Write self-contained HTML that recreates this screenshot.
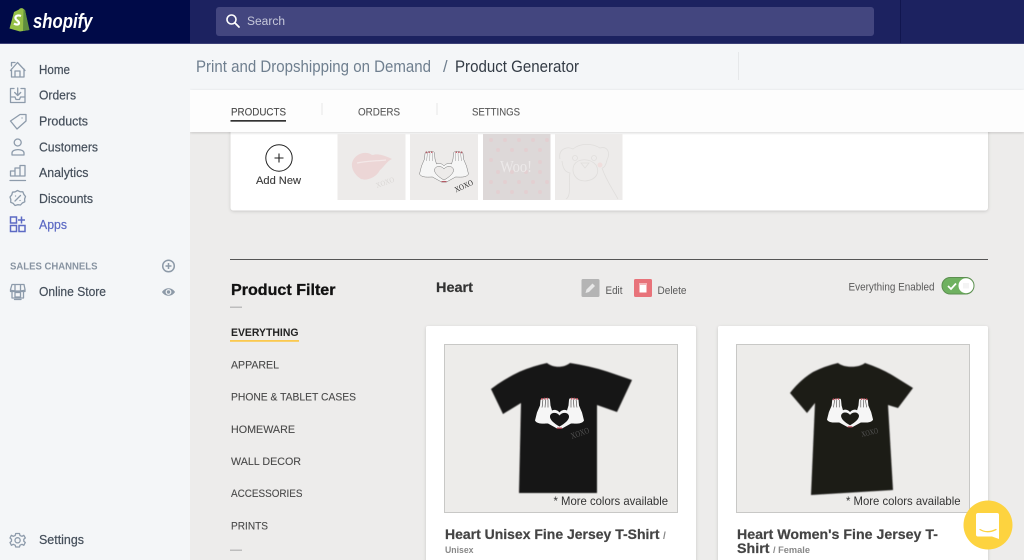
<!DOCTYPE html>
<html><head><meta charset="utf-8"><style>
html,body{margin:0;padding:0;width:1024px;height:560px;overflow:hidden;background:#edeceb}
svg{display:block}
.s{font-family:"Liberation Sans",sans-serif;font-size:12.500px;fill:#454f5b;stroke:#454f5b;stroke-width:.2}
.m{font-family:"Liberation Sans",sans-serif;font-size:11px;fill:#4a4a4a;stroke:#4a4a4a;stroke-width:.12}
.o{font-family:"Liberation Sans",sans-serif;font-size:11px;fill:#5a5a5a}
.b{font-family:"Liberation Sans",sans-serif;font-weight:700}
.i{fill:none;stroke:#8d9bab;stroke-width:1.300;stroke-linejoin:round;stroke-linecap:round}
</style></head><body>
<svg width="1024" height="560" viewBox="0 0 1024 560" xmlns="http://www.w3.org/2000/svg">
<defs>
<filter id="sh" x="-5%" y="-5%" width="110%" height="110%"><feDropShadow dx="0" dy="1" stdDeviation="1.500" flood-color="#000" flood-opacity=".16"/></filter>
<filter id="bl"><feGaussianBlur stdDeviation=".4"/></filter>
<path id="hp" fill-rule="evenodd" d="M5.500 2.500Q6.500 0 8 1.500Q9 0 10.500 1Q12 0 13 1Q14.500 0 15 2.500L15.500 8L17 13C20 11.500 23 13 24.500 15C26 13 29 11.500 32 13L33.500 8L34 2.500Q34.500 0 36 1Q37 0 38.500 1Q40 0 41 1.500Q42.500 0 43.500 2.500L44 8L47 15L49 23C47 27 40 26 36 26L27 31L22 31L13 26C9 26 2 27 0 23L2 15L5 8ZM24.500 29C19 26 14.500 22 15 18.500C16 14.500 22 14.500 24.500 18C27 14.500 33 14.500 34 18.500C34.500 22 30 26 24.500 29Z"/>
<g id="hands">
<use href="#hp" fill="#f6f6f6"/>
<path fill="none" stroke="currentColor" stroke-width=".5" d="M8 2L7 10M10.500 2L10 10M13 2L13 10M41 2L42 10M38.500 2L39 10M36 2L36 10"/>
<path fill="#c8505e" d="M6.200 .5h1.500v1.700H6.200zM9 .3h1.300v1.700H9zM11.600 .3h1.300v1.700h-1.300zM36.100 .3h1.300v1.700h-1.300zM38.700 .3h1.300v1.700h-1.300zM41.300 .5h1.500v1.700h-1.500zM22 30h5v1.200h-5z"/>
</g>
</defs>

<!-- page -->
<rect width="1024" height="560" fill="#edeceb"/>

<!-- title bar -->
<rect x="190" y="44" width="834" height="46" fill="#f4f6f8"/>
<rect x="738" y="52" width="1" height="28" fill="#e6e8ea"/>
<text x="196" y="72" font-family="Liberation Sans,sans-serif" font-size="16.500" fill="#6f7f8f" textLength="235" lengthAdjust="spacingAndGlyphs">Print and Dropshipping on Demand</text>
<text x="443" y="72" font-family="Liberation Sans,sans-serif" font-size="16.500" fill="#6f7f8f">/</text>
<text x="455" y="72" font-family="Liberation Sans,sans-serif" font-size="16.500" fill="#333b45" textLength="124" lengthAdjust="spacingAndGlyphs">Product Generator</text>

<!-- card top -->
<rect x="230.500" y="120" width="757.500" height="90.500" rx="3" fill="#fff" filter="url(#sh)"/>

<!-- tabs -->
<rect x="190" y="90" width="834" height="42" fill="#fdfdfd" filter="url(#sh)"/>
<text class="m" x="231" y="115.500" textLength="55" lengthAdjust="spacingAndGlyphs">PRODUCTS</text>
<rect x="230.500" y="120" width="55.500" height="1.700" fill="#333"/>
<rect x="321.500" y="103" width="1" height="12" fill="#e8e8e8"/>
<text class="m" x="358" y="115.500" textLength="42" lengthAdjust="spacingAndGlyphs" style="fill:#5a5a5a;stroke:#5a5a5a">ORDERS</text>
<rect x="436.500" y="103" width="1" height="12" fill="#e8e8e8"/>
<text class="m" x="472" y="115.500" textLength="48" lengthAdjust="spacingAndGlyphs" style="fill:#5a5a5a;stroke:#5a5a5a">SETTINGS</text>

<!-- top bar -->
<rect width="1024" height="43" fill="#1c2260"/>
<rect x="0" width="190" height="43" fill="#000a48"/>
<rect x="900" width="1" height="43" fill="#11164f"/>
<rect y="43" width="1024" height="1" fill="#3d4178"/>
<rect x="216" y="7" width="658" height="29" rx="3" fill="#43467f"/>
<circle cx="231.500" cy="19.500" r="4.500" fill="none" stroke="#fff" stroke-width="1.600"/>
<path d="M235 23l4 4" stroke="#fff" stroke-width="1.800" stroke-linecap="round"/>
<text x="247" y="25" font-family="Liberation Sans,sans-serif" font-size="11.500" fill="#c6c8da" textLength="38" lengthAdjust="spacingAndGlyphs">Search</text>

<!-- logo -->
<path d="M9.500 28.500L14 12L19 9.500C20 8 22.500 7.500 24 9.500L25 10L29 30L20 31.500Z" fill="#95bf47"/>
<path d="M23.500 10L25 10L29.500 30L23 31Z" fill="#5e8e3e"/>
<path d="M21 16c-4-1.500-6 .5-5.500 2.500.5 2 3.500 2.500 3.500 4.500 0 2-3 2-5 .5" fill="none" stroke="#fff" stroke-width="2.200"/>
<text x="33" y="28" font-family="Liberation Sans,sans-serif" font-weight="700" font-style="italic" font-size="20" fill="#fff" textLength="59.500" lengthAdjust="spacingAndGlyphs">shopify</text>

<!-- sidebar -->
<rect x="0" y="44" width="190" height="516" fill="#f4f6f8"/>
<path class="i" d="M10.500 70.500L17.500 62.500L25 70.500M11.500 69V77H24V69M15 77V71H20V77M11.500 66V62.500H15"/>
<path class="i" d="M14 88.500H10.500V102.500H25V88.500H21M10.500 97H15L16 99.500H19.500L20.500 97H25M17.700 88V95M14.700 92.500L17.700 95.500L20.700 92.500"/>
<path class="i" d="M10.500 121L20 114.500H26V121L17 129ZM22 118h.1"/>
<circle class="i" cx="17.700" cy="142.500" r="3.500"/>
<path class="i" d="M12 155V153C12 148.500 24 148.500 24 153V155Z"/>
<path class="i" d="M10.500 176V171H15V176M15 176V168H20V176M20 176V165.500H25V176H10.500M10 180.500H25.500"/>
<path class="i" d="M17.500 190.500L20 191.700L22.800 191.800L23.800 194.300L25.500 196.500L24.600 199L24.800 201.800L22.300 203L20.500 205L17.700 204.700L15 205.500L13.200 203.400L10.700 202.300L10.800 199.500L10 197L11.800 194.800L12.500 192.200L15.200 191.800Z"/>
<path class="i" d="M15 201L20.500 195.500M15.500 196h.1M20 200.500h.1"/>
<g fill="none" stroke="#5c6ac4" stroke-width="1.500">
<rect x="10.500" y="217" width="6" height="6"/><rect x="10.500" y="225.500" width="6" height="6"/><rect x="19" y="225.500" width="6" height="6"/>
<path d="M21.500 216.500V223.500M18 220H25"/></g>
<path class="i" d="M12 284.500H24L25 289.500C25 291.500 10.500 291.500 10.500 289.500ZM10.500 289.500V291.500H25V289.500M15 285V291M20.500 285V291M12 292V298H23.500V292M14.500 299.500H21M15 292.500H20.500V297H15Z"/>
<path class="i" d="M15.700 533.500H19.500L20 535.500L22 536.300L23.800 535.300L25.300 538L23.800 539.300V541.300L25.300 542.500L23.800 545.300L22 544.300L20 545.200L19.500 547H15.700L15.200 545.200L13.200 544.300L11.400 545.300L10 542.500L11.500 541.300V539.300L10 538L11.400 535.300L13.200 536.300L15.200 535.500Z"/>
<circle class="i" cx="17.600" cy="540.300" r="2.600"/>

<text class="s" x="39" y="74" textLength="31" lengthAdjust="spacingAndGlyphs">Home</text>
<text class="s" x="39" y="99.700" textLength="37" lengthAdjust="spacingAndGlyphs">Orders</text>
<text class="s" x="39" y="125.500" textLength="49" lengthAdjust="spacingAndGlyphs">Products</text>
<text class="s" x="39" y="151.300" textLength="59" lengthAdjust="spacingAndGlyphs">Customers</text>
<text class="s" x="39" y="177" textLength="49.500" lengthAdjust="spacingAndGlyphs">Analytics</text>
<text class="s" x="39" y="203" textLength="54" lengthAdjust="spacingAndGlyphs">Discounts</text>
<text class="s" x="39" y="229" textLength="28" lengthAdjust="spacingAndGlyphs" style="fill:#5c6ac4;stroke:#5c6ac4">Apps</text>
<text x="10" y="269.500" font-family="Liberation Sans,sans-serif" font-size="10" font-weight="700" fill="#8793a1" textLength="87.500" lengthAdjust="spacingAndGlyphs">SALES CHANNELS</text>
<text class="s" x="39" y="296" textLength="67" lengthAdjust="spacingAndGlyphs">Online Store</text>
<text class="s" x="39" y="544" textLength="45" lengthAdjust="spacingAndGlyphs">Settings</text>
<circle cx="168.500" cy="266" r="5.800" fill="none" stroke="#8d9aa8" stroke-width="1.500"/>
<path d="M165.500 266H171.500M168.500 263V269" stroke="#8d9aa8" stroke-width="1.500"/>
<path d="M162 292C165 287 172 287 175 292C172 297 165 297 162 292Z" fill="#8d9aa8"/>
<circle cx="168.500" cy="292" r="2.300" fill="none" stroke="#f4f6f8" stroke-width="1.200"/>

<!-- add new -->
<circle cx="279" cy="158" r="13.200" fill="none" stroke="#222" stroke-width="1"/>
<path d="M274.500 158H283.500M279 153.500V162.500" stroke="#222" stroke-width="1.100"/>
<text class="m" x="256" y="184" textLength="45" lengthAdjust="spacingAndGlyphs" style="fill:#3a3a3a;stroke:#3a3a3a">Add New</text>

<!-- thumbnails -->
<rect x="337.500" y="134" width="68" height="66" fill="#edebea"/>
<path d="M352 163C354 155 362 152 367 153C370 153 371 155 373 155C378 153 386 156 392 159C387 161 384 167 380 170C376 178 366 181 361 179C356 176 351 170 352 163Z" fill="#ecd6d6"/>
<path d="M357 163C366 161 376 161 386 160" fill="none" stroke="#f3e8e8" stroke-width="1.200"/>
<text x="377" y="188" font-family="Liberation Serif,serif" font-size="7.500" fill="#d9d6d4" textLength="19" lengthAdjust="spacingAndGlyphs" transform="rotate(-20 377 188)">XOXO</text>
<rect x="410" y="134" width="68" height="66" fill="#edebea"/>
<g transform="translate(419.500 151)" color="#999"><use href="#hands"/><use href="#hp" fill="none" stroke="#777" stroke-width=".5"/></g>
<text x="456" y="192.500" font-family="Liberation Serif,serif" font-size="8" fill="#222" textLength="19.500" lengthAdjust="spacingAndGlyphs" transform="rotate(-25 456 192.500)">XOXO</text>
<rect x="483" y="134" width="67.500" height="66" fill="#ddd8d8"/>
<g fill="#e3cfd1"><circle cx="491" cy="140" r="2"/><circle cx="505" cy="140" r="2"/><circle cx="519" cy="140" r="2"/><circle cx="533" cy="140" r="2"/><circle cx="547" cy="140" r="2"/><circle cx="498" cy="150" r="2"/><circle cx="512" cy="150" r="2"/><circle cx="526" cy="150" r="2"/><circle cx="540" cy="150" r="2"/><circle cx="491" cy="160" r="2"/><circle cx="540" cy="162" r="2"/><circle cx="498" cy="172" r="2"/><circle cx="512" cy="172" r="2"/><circle cx="526" cy="172" r="2"/><circle cx="540" cy="172" r="2"/><circle cx="491" cy="182" r="2"/><circle cx="505" cy="182" r="2"/><circle cx="519" cy="182" r="2"/><circle cx="533" cy="182" r="2"/><circle cx="547" cy="182" r="2"/><circle cx="498" cy="192" r="2"/><circle cx="512" cy="192" r="2"/><circle cx="526" cy="192" r="2"/><circle cx="540" cy="192" r="2"/></g>
<text x="500" y="172" font-family="Liberation Serif,serif" font-size="17" fill="#ece9e9" textLength="32" lengthAdjust="spacingAndGlyphs">Woo!</text>
<rect x="555" y="134" width="67.500" height="66" fill="#edebea"/>
<g fill="none" stroke="#e0dedc" stroke-width=".8"><path d="M560 159C558 149 567 146 573 149C580 143 592 143 600 148C607 146 611 152 607 160C606 165 604 168 602 168M562 161C563 170 566 172 570 173C568 180 572 196 566 199M602 168C606 180 612 188 618 199"/><path d="M574 165C578 158 590 158 596 165C600 172 597 180 585 181C575 181 571 172 574 165Z"/><circle cx="575" cy="158" r="2.500"/><circle cx="594" cy="158" r="2.500"/><path d="M581 163H589L585 168Z"/></g>
<circle cx="600" cy="165" r="2.500" fill="#f0dedd"/>

<!-- divider -->
<rect x="230" y="259" width="758" height="1" fill="#555"/>

<!-- filter -->
<text class="b" x="231" y="295" font-size="15.500" fill="#111" stroke="#111" stroke-width=".3" textLength="104.500" lengthAdjust="spacingAndGlyphs">Product Filter</text>
<rect x="230" y="306.500" width="12" height="1.500" fill="#bdbdbd"/>
<text class="b" x="231" y="336" font-size="11" fill="#222" textLength="67.500" lengthAdjust="spacingAndGlyphs">EVERYTHING</text>
<rect x="230" y="340" width="69" height="1.800" fill="#fbc94f"/>
<text class="m" x="231" y="368.500" textLength="48" lengthAdjust="spacingAndGlyphs">APPAREL</text>
<text class="m" x="231" y="400.500" textLength="125" lengthAdjust="spacingAndGlyphs">PHONE &amp; TABLET CASES</text>
<text class="m" x="231" y="433" textLength="64" lengthAdjust="spacingAndGlyphs">HOMEWARE</text>
<text class="m" x="231" y="465" textLength="70" lengthAdjust="spacingAndGlyphs">WALL DECOR</text>
<text class="m" x="231" y="497" textLength="71.500" lengthAdjust="spacingAndGlyphs">ACCESSORIES</text>
<text class="m" x="231" y="529.500" textLength="37" lengthAdjust="spacingAndGlyphs">PRINTS</text>
<rect x="230" y="549.500" width="12" height="1.500" fill="#bdbdbd"/>

<!-- heart header -->
<text class="b" x="436" y="292" font-size="14" fill="#333" stroke="#333" stroke-width=".2" textLength="37" lengthAdjust="spacingAndGlyphs">Heart</text>
<rect x="581.500" y="279" width="18" height="18" rx="1.500" fill="#b4b4b4"/>
<path d="M585.500 293L586.500 289.500L592.500 283.500L595 286L589 292Z" fill="#e8e8e8"/>
<text class="o" x="605.500" y="294" textLength="17" lengthAdjust="spacingAndGlyphs">Edit</text>
<rect x="634" y="279" width="18" height="18" rx="1.500" fill="#e8737a"/>
<path d="M639.500 285H646.500V292.500H639.500ZM639 283.500H647V284.500H639Z" fill="#fff"/>
<text class="o" x="657.500" y="294" textLength="29" lengthAdjust="spacingAndGlyphs">Delete</text>
<text class="o" x="848.500" y="290.500" textLength="86" lengthAdjust="spacingAndGlyphs">Everything Enabled</text>
<rect x="942" y="277.500" width="32" height="16.500" rx="8.200" fill="#6fb160" stroke="#5c8f50" stroke-width="1"/>
<circle cx="966" cy="285.700" r="7.500" fill="#fff"/>
<path d="M948 286L951 289L956 283.500" fill="none" stroke="#fff" stroke-width="1.700"/>
<path d="M964 283V288.500M966 283V288.500M968 283V288.500" stroke="#ddd" stroke-width=".6"/>

<!-- card 1 -->
<rect x="426" y="326" width="270" height="240" rx="2" fill="#fff" filter="url(#sh)"/>
<rect x="444.500" y="344.500" width="233" height="168" fill="#edecea" stroke="#c8c8c6" stroke-width="1"/>
<path d="M491 389Q504 379 520 371.500Q533 366 547 363C553 368 564 368 570 363Q590 366 607 371.500L632 380L617 412L597 405L597 493L519 493L521 403L503 414Z" fill="#151313" filter="url(#bl)"/>
<g transform="translate(535 397.500)" color="#151313"><use href="#hands"/></g>
<text x="572" y="439" font-family="Liberation Serif,serif" font-size="8.500" fill="#555" textLength="19" lengthAdjust="spacingAndGlyphs" transform="rotate(-20 572 439)">XOXO</text>
<text x="553.500" y="505" font-family="Liberation Sans,sans-serif" font-size="12" fill="#333" textLength="114.500" lengthAdjust="spacingAndGlyphs">* More colors available</text>
<text class="b" x="445" y="539" font-size="14" fill="#444" stroke="#444" stroke-width=".2" textLength="214.500" lengthAdjust="spacingAndGlyphs">Heart Unisex Fine Jersey T-Shirt</text>
<text x="663" y="539" font-family="Liberation Sans,sans-serif" font-size="10" font-weight="700" fill="#888">/</text>
<text class="b" x="445" y="553" font-size="9" fill="#888" textLength="28.500" lengthAdjust="spacingAndGlyphs">Unisex</text>

<!-- card 2 -->
<rect x="718" y="326" width="270" height="240" rx="2" fill="#fff" filter="url(#sh)"/>
<rect x="736.500" y="344.500" width="233" height="168" fill="#edecea" stroke="#c8c8c6" stroke-width="1"/>
<path d="M790 393Q800 380 813 372Q825 366 838 363C844 368 859 368 865 363Q880 368 892 375L913 388L898 408L888 405L893 490L811 495L815 403L807 413Z" fill="#1b1a19" filter="url(#bl)"/>
<g transform="translate(827 398) scale(.94)" color="#1b1a19"><use href="#hands"/></g>
<text x="862" y="437" font-family="Liberation Serif,serif" font-size="8" fill="#555" textLength="17" lengthAdjust="spacingAndGlyphs" transform="rotate(-14 862 437)">XOXO</text>
<text x="846" y="505" font-family="Liberation Sans,sans-serif" font-size="12" fill="#333" textLength="114.500" lengthAdjust="spacingAndGlyphs">* More colors available</text>
<text class="b" x="737" y="539" font-size="14" fill="#444" stroke="#444" stroke-width=".2" textLength="201" lengthAdjust="spacingAndGlyphs">Heart Women's Fine Jersey T-</text>
<text class="b" x="737" y="553" font-size="14" fill="#444" stroke="#444" stroke-width=".2" textLength="32.500" lengthAdjust="spacingAndGlyphs">Shirt</text>
<text class="b" x="773" y="553" font-size="9" fill="#888" textLength="37" lengthAdjust="spacingAndGlyphs">/ Female</text>

<!-- chat -->
<circle cx="988" cy="525" r="24.500" fill="#fdd33f"/>
<path d="M978 513H997A2 2 0 0 1 999 515V539L992 536.500H978A2 2 0 0 1 976 534.500V515A2 2 0 0 1 978 513Z" fill="#fff"/>
<path d="M980 529.500C985 532.500 990 532.500 996 529.500" fill="none" stroke="#fdd33f" stroke-width="1.300" stroke-linecap="round"/>
</svg>
</body></html>
